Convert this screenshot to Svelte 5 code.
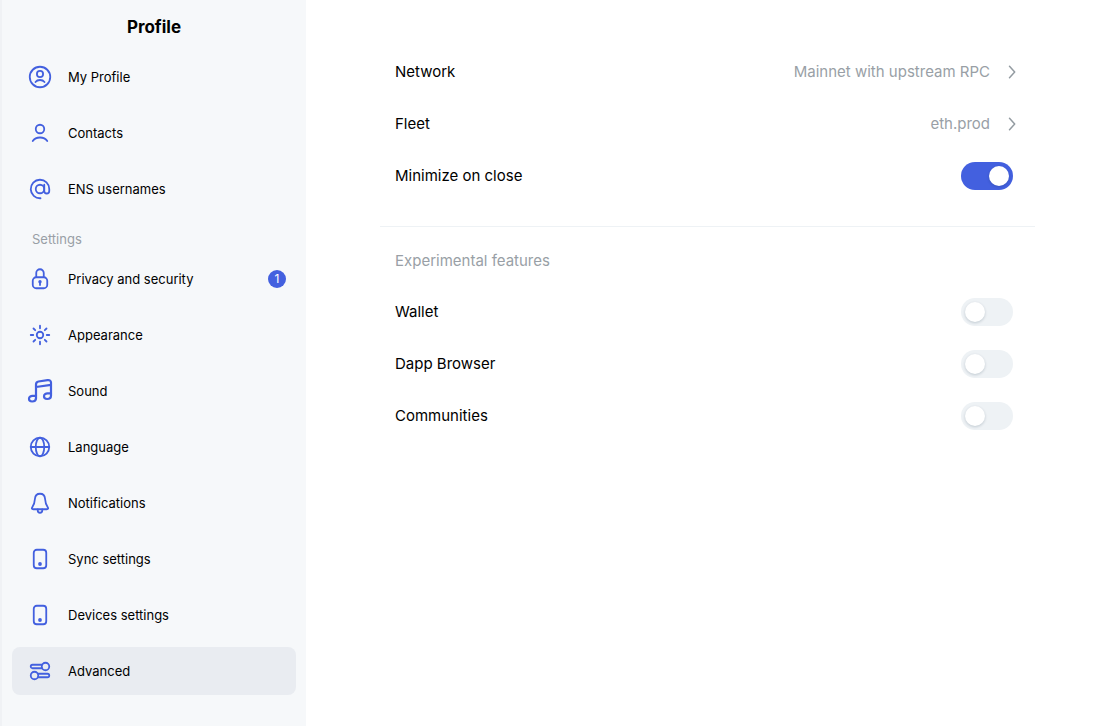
<script>
  const accountItems = [
    { icon: 'profile', label: 'My Profile' },
    { icon: 'contact', label: 'Contacts' },
    { icon: 'at', label: 'ENS usernames' }
  ];
  const settingsItems = [
    { icon: 'lock', label: 'Privacy and security', badge: 1 },
    { icon: 'sun', label: 'Appearance' },
    { icon: 'music', label: 'Sound' },
    { icon: 'globe', label: 'Language' },
    { icon: 'bell', label: 'Notifications' },
    { icon: 'device', label: 'Sync settings' },
    { icon: 'device', label: 'Devices settings' },
    { icon: 'sliders', label: 'Advanced' }
  ];

  let selected = $state('Advanced');
  let minimize = $state([{ label: 'Minimize on close', on: true }]);
  let features = $state([
    { label: 'Wallet', on: false },
    { label: 'Dapp Browser', on: false },
    { label: 'Communities', on: false }
  ]);
  const links = [
    { label: 'Network', value: 'Mainnet with upstream RPC' },
    { label: 'Fleet', value: 'eth.prod' }
  ];
</script>

{#snippet icon(name)}
  <svg class="icon" viewBox="0 0 24 24" aria-hidden="true">
    {#if name === 'profile'}
      <circle cx="12" cy="12" r="10.250" />
      <circle cx="12" cy="9" r="3.100" />
      <path d="M7.500 17c1-1.300 2.600-2 4.500-2s3.500.7 4.500 2" />
    {:else if name === 'contact'}
      <circle cx="12" cy="8" r="4.250" />
      <path d="M4.750 20c1.500-2.300 4.100-3.500 7.250-3.500s5.750 1.200 7.250 3.500" />
    {:else if name === 'at'}
      <circle cx="12" cy="12" r="4.250" />
      <path d="M16.250 7.750v6.250a2.500 2.500 0 0 0 5 0V12A9.250 9.250 0 1 0 12.500 21.250" />
    {:else if name === 'lock'}
      <path d="M8.250 10.200V6a3.750 3.750 0 0 1 7.500 0v4.200" />
      <rect x="4.750" y="10.250" width="14.500" height="11" rx="3.500" />
      <circle class="solid" cx="12" cy="14.700" r="1.700" />
      <path d="M12 15v3" />
    {:else if name === 'sun'}
      <circle cx="12" cy="12" r="3.250" />
      <path d="M12 2.750v2.500M12 18.750v2.500M2.750 12h2.500M18.750 12h2.500M5.500 5.500l1.700 1.700M16.800 16.800l1.700 1.700M5.500 18.500l1.700-1.700M16.800 7.200l1.700-1.700" />
    {:else if name === 'music'}
      <path class="bold" d="M8 19.500V5.500Q8 3 10.500 2.500l9-1.300Q23 .8 23 3.500V16.500M8 8l15-2.200" />
      <path class="bold" d="M8 16.800H4.700a3.500 3 0 0 0-3.700 3c0 1.600 1.300 2.700 3.100 2.700 2.400 0 3.900-1.400 3.900-3.500M23 14.300h-3.300a3.500 3 0 0 0-3.700 3c0 1.600 1.300 2.700 3.100 2.700 2.400 0 3.900-1.400 3.900-3.500" />
    {:else if name === 'globe'}
      <circle cx="12" cy="12" r="9.250" />
      <ellipse cx="12" cy="12" rx="4.250" ry="9.250" />
      <path d="M2.750 12h18.500" />
    {:else if name === 'bell'}
      <path d="M12 2.750c-3 0-4.800 2-5 4.750C6.700 11.500 6.200 13.500 4.400 16c-1 1.500-.6 2.250.9 2.250h13.400c1.500 0 1.900-.75.9-2.250-1.800-2.500-2.300-4.500-2.600-8.500-.2-2.750-2-4.750-5-4.750Z" />
      <path d="M9.750 18.500v1a2.250 2.250 0 0 0 4.500 0v-1" />
    {:else if name === 'device'}
      <rect x="5.750" y="2.750" width="12.500" height="18.500" rx="3" />
      <circle class="solid" cx="12" cy="17" r="1.900" />
    {:else if name === 'sliders'}
      <path d="M14 5.750H4.500a1.750 1.750 0 0 0 0 3.500H14M10 14.750h9.500a1.750 1.750 0 0 1 0 3.500H10" />
      <circle cx="17.500" cy="7.500" r="3.750" />
      <circle cx="6.500" cy="16.500" r="3.750" />
    {/if}
  </svg>
{/snippet}

{#snippet menu(items)}
  <ul class="menu">
    {#each items as item}
      <li>
        <button
          type="button"
          class="item"
          class:selected={selected === item.label}
          onclick={() => (selected = item.label)}
        >
          {@render icon(item.icon)}
          <span class="name">{item.label}</span>
          {#if item.badge}<span class="badge">{item.badge}</span>{/if}
        </button>
      </li>
    {/each}
  </ul>
{/snippet}

{#snippet toggles(rows)}
  {#each rows as row}
    <label class="row">
      <span>{row.label}</span>
      <input class="switch" type="checkbox" role="switch" bind:checked={row.on} />
    </label>
  {/each}
{/snippet}

<div class="layout">
  <nav class="sidebar">
    <h1>Profile</h1>
    {@render menu(accountItems)}
    <h2 class="group">Settings</h2>
    {@render menu(settingsItems)}
  </nav>

  <main>
    <section>
      {#each links as link}
        <button type="button" class="row">
          <span>{link.label}</span>
          <span class="value">
            {link.value}
            <svg class="chevron" viewBox="0 0 8 14" aria-hidden="true"><path d="M1.500 1.200L6.700 7l-5.200 5.800" /></svg>
          </span>
        </button>
      {/each}
      {@render toggles(minimize)}
    </section>
    <hr />
    <section>
      <h2 class="heading">Experimental features</h2>
      {@render toggles(features)}
    </section>
  </main>
</div>

<style>
  :global(body) {
    margin: 0;
    background: #fff;
  }
  .layout {
    display: flex;
    min-height: 100vh;
    font-family: Inter, sans-serif;
    color: #000;
  }
  h1,
  h2,
  ul {
    margin: 0;
    padding: 0;
  }
  button {
    border: 0;
    background: none;
    font: inherit;
    color: inherit;
    text-align: left;
    cursor: pointer;
  }
  .sidebar {
    box-sizing: border-box;
    flex: 0 0 306px;
    padding: 16px 10px;
    border-left: 2px solid #f0f2f5;
    background: #f6f8fa;
  }
  h1 {
    margin-bottom: 15px;
    font-size: 17px;
    line-height: 22px;
    font-weight: 700;
    text-align: center;
  }
  .menu {
    display: grid;
    gap: 8px;
    list-style: none;
  }
  .item {
    display: flex;
    align-items: center;
    gap: 16px;
    width: 100%;
    height: 48px;
    padding: 0 10px 0 16px;
    border-radius: 8px;
    font-size: 13px;
    line-height: 20px;
  }
  .item.selected {
    background: #e9ecf1;
  }
  .name {
    flex: 1;
  }
  .icon {
    width: 24px;
    height: 24px;
    overflow: visible;
    fill: none;
    stroke: #4360df;
    stroke-width: 1.8;
    stroke-linecap: round;
    stroke-linejoin: round;
  }
  .icon .solid {
    fill: #4360df;
    stroke: none;
  }
  .icon .bold {
    stroke-width: 2.2;
  }
  .badge {
    width: 18px;
    border-radius: 9px;
    background: #4360df;
    color: #fff;
    font-size: 12px;
    line-height: 18px;
    text-align: center;
  }
  .group {
    padding: 16px 20px 6px;
    color: #999fa6;
    font-size: 13px;
    line-height: 20px;
    font-weight: 400;
  }
  main {
    flex: 1;
    padding: 46px 69px 24px 74px;
    font-size: 15px;
    line-height: 22px;
  }
  section {
    padding: 0 22px 0 15px;
  }
  .row {
    display: flex;
    align-items: center;
    justify-content: space-between;
    width: 100%;
    height: 52px;
    padding: 0;
  }
  .value {
    display: flex;
    align-items: center;
    gap: 18px;
    margin-right: -3px;
    color: #999fa6;
  }
  .chevron {
    width: 8px;
    height: 14px;
    fill: none;
    stroke: #939ba1;
    stroke-width: 1.5;
    stroke-linecap: round;
    stroke-linejoin: round;
  }
  hr {
    height: 1px;
    margin: 24px 0 0;
    border: 0;
    background: #eef2f5;
  }
  .heading {
    padding: 23px 0 14px;
    color: #999fa6;
    font-size: 15px;
    line-height: 22px;
    font-weight: 400;
  }
  .switch {
    appearance: none;
    box-sizing: border-box;
    display: flex;
    width: 52px;
    height: 28px;
    margin: 0;
    padding: 4px;
    border-radius: 14px;
    background: #eef2f5;
    cursor: pointer;
  }
  .switch::before {
    content: '';
    width: 20px;
    height: 20px;
    border-radius: 50%;
    background: #fff;
    box-shadow: 0 1px 3px rgba(0, 34, 61, 0.2);
  }
  .switch:checked {
    justify-content: flex-end;
    background: #4360df;
  }
</style>
